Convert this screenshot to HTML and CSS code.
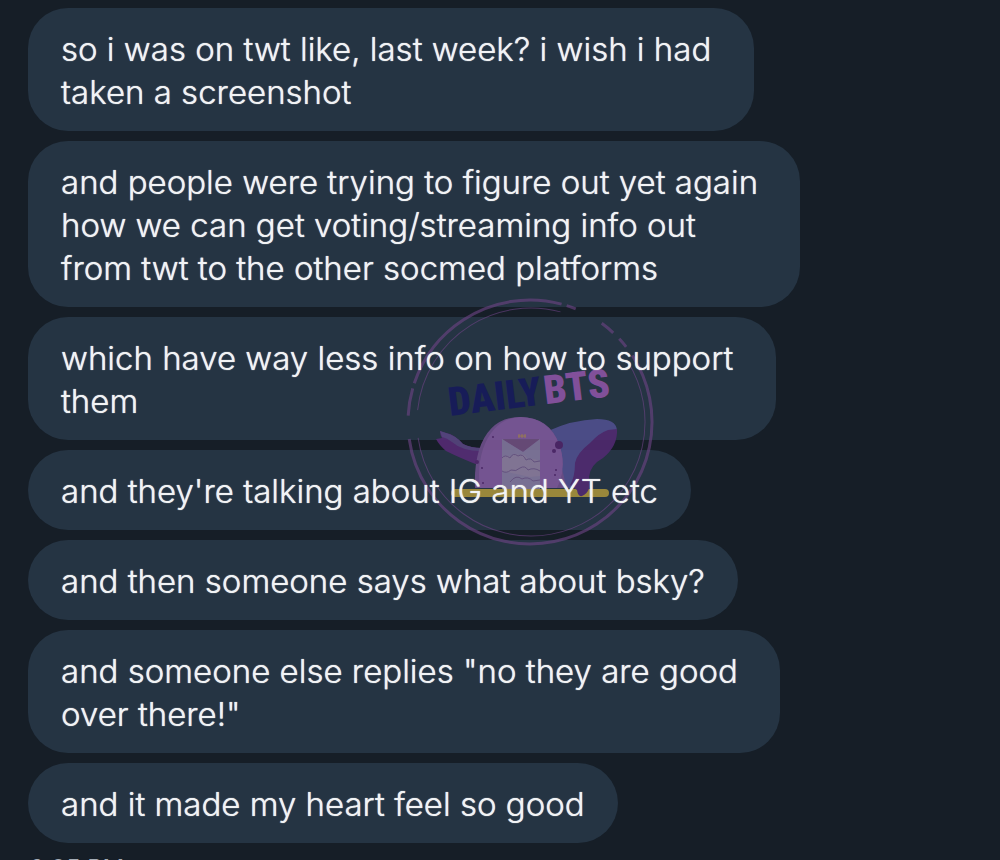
FILE: index.html
```html
<!DOCTYPE html>
<html lang="en">
<head>
<meta charset="UTF-8" />
<meta name="viewport" content="width=device-width, initial-scale=1" />
<title>Messages</title>
<link rel="stylesheet" href="styles.css">
</head>
<body>

<main class="chat">
  <p class="bubble"><span>so i was on twt like, last week? i wish i had&nbsp;<br>taken a screenshot</span></p>
  <p class="bubble"><span>and people were trying to figure out yet again&nbsp;<br>how we can get voting/streaming info out<br>from twt to the other socmed platforms</span></p>
  <p class="bubble"><span>which have way less info on how to support&nbsp;<br>them</span></p>
  <p class="bubble"><span>and they're talking about IG and YT etc</span></p>
  <p class="bubble"><span>and then someone says what about bsky?</span></p>
  <p class="bubble"><span>and someone else replies "no they are good&nbsp;<br>over there!"</span></p>
  <p class="bubble"><span>and it made my heart feel so good</span></p>
  <time class="time">6:05 PM</time>

  <svg class="watermark" viewBox="0 0 250 250" role="img" aria-label="Daily BTS">
    <!-- rings -->
    <g fill="none" stroke="#6f4487" stroke-opacity=".6">
      <circle cx="124" cy="125" r="122" stroke-width="3" pathLength="360" stroke-dasharray="205 11 13 2.5 86.5 2.5 4.5 14 7 4 5 5" transform="rotate(327 124 125)" />
      <circle cx="125" cy="125" r="114" stroke-width="1" pathLength="360" stroke-dasharray="204 14 99 43" transform="rotate(328 125 125)" />
    </g>
    <g opacity=".88">
      <!-- tail -->
      <path d="M30 142 Q33 148 40 154 Q54 161 72 168 L76 151 Q65 151 57 147 Q48 137 40 136 L34 134 Q34 138 36 141Z" fill="#572b76" />
      <path d="M34 134 L40 136 Q49 138 57 147 Q65 151 76 151 L75 154 Q56 154 46 145 Q41 141 36 140Z" fill="#594682" />
      <!-- head and fin -->
      <path d="M142 134 Q166 123 191 122 Q210 122 211 133 L180 165 L164 191 H145Z" fill="#515090" />
      <rect x="45" y="192" width="158" height="8" rx="4" fill="#a9933b" />
      <path d="M211 132 Q212 149 197 161 Q184 168 183 180 Q186 195 176 199 Q172 200 171 193 L164 188 Q169 180 169 166 Q171 156 184 146 Q193 136 202 133Z" fill="#522a72" />
      <!-- body -->
      <path d="M69 191 Q68 170 73 153 Q84 120 114 120 Q143 120 153 147 Q158 161 156 172 L160 188 V191Z" fill="#70508d" />
      <path d="M74 191 Q71 171 77 152 Q88 121 115 120 Q143 121 153 147 Q160 166 154 184 L151 191Z" fill="#80599c" />
      <!-- jacket -->
      <path d="M96 142 H134 L117 155Z" fill="#705080" />
      <path d="M96 142 L117 155 L134 142 V192 H96Z" fill="#84799f" />
      <path d="M96 161 Q100 157 105 160 Q108 155 113 158 Q119 156 122 163 Q129 160 134 165 V179 L124 180 L96 174Z" fill="#8d7d9f" />
      <g fill="none" stroke="#6d5787">
        <path d="M96 161 Q99 157 104 161 Q107 155 112 159 Q117 156 120 163 Q125 160 128 165 L134 164" />
        <path d="M96 174 Q100 177 105 173 Q110 175 114 171 Q119 168 122 173 Q128 170 134 174 M104 185 Q110 177 116 182 Q122 179 127 184 L134 183" />
      </g>
      <path d="M113 137 V141 M116 137 V141 M119 137 V141 M112 139 H120" fill="none" stroke="#a78556" />
      <!-- spots -->
      <g fill="#51276c">
        <circle cx="153" cy="148" r="4" />
        <circle cx="148" cy="154" r="2" />
        <circle cx="150" cy="173" r="1" />
        <circle cx="149" cy="178" r="1" />
        <circle cx="87" cy="140" r="1" />
        <circle cx="71" cy="165" r="2" />
        <circle cx="76" cy="171" r="1" />
        <circle cx="77" cy="186" r="1" />
      </g>
    </g>
    <g class="wordmark" transform="rotate(-7 44 118)">
      <text class="daily" x="44" y="119">DAILY</text>
      <text class="bts" x="140" y="119">BTS</text>
    </g>
  </svg>
</main>

</body>
</html>
```
FILE: styles.css
```css
* {
  box-sizing: border-box;
}
body {
  margin: 0;
  background-color: #161e27;
  color: #f1f3f5;
  font-family: Inter, sans-serif;
}
.chat {
  position: relative;
  display: flex;
  flex-direction: column;
  align-items: flex-start;
  gap: 10px;
  height: 100vh;
  padding: 8px 28px 0;
  overflow: hidden;
}
.bubble {
  flex-shrink: 0;
  margin: 0;
  padding: 20px 33px 17px;
  border-radius: 40px;
  background-color: #253443;
  font-size: 33px;
  font-weight: 300;
  line-height: 43px;
  text-shadow: 0 0 1px #f1f3f5;
}
/* message text stays readable over the watermark */
.bubble span {
  position: relative;
  z-index: 1;
}
.time {
  padding-left: 1px;
  color: #a5adb6;
  font-size: 24px;
  line-height: 32px;
}
.watermark {
  position: absolute;
  top: 297px;
  left: 406px;
  width: 250px;
}
.wordmark {
  font-family: "Roboto Condensed", Roboto, sans-serif;
  font-size: 40px;
  font-weight: 900;
}
.daily {
  fill: #171c58;
}
.bts {
  fill: #81509a;
}
```
